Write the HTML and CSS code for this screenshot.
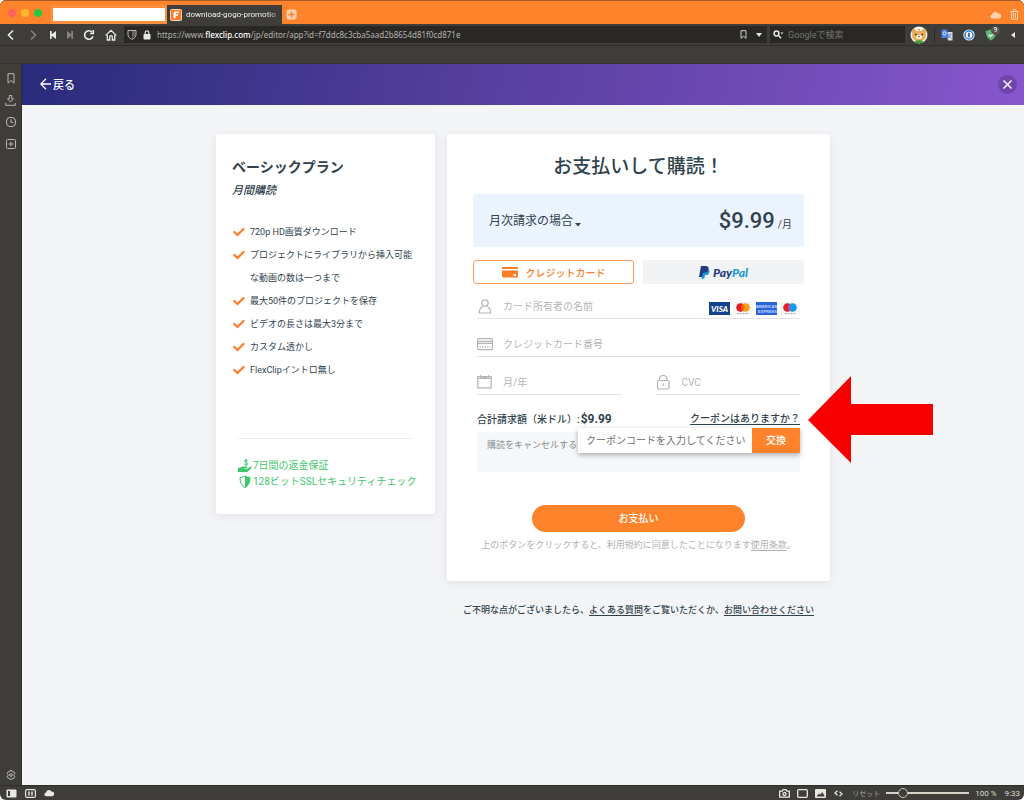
FILE: index.html
```html
<!DOCTYPE html>
<html lang="ja">
<head>
<meta charset="utf-8">
<meta name="viewport" content="width=device-width, initial-scale=1">
<title>FlexClip お支払い</title>
<link rel="stylesheet" href="styles.css">
</head>
<body>
<svg width="0" height="0" hidden>
  <symbol id="check" viewBox="0 0 12 10"><path d="m1.300 5 3.200 3 6-6" fill="none" stroke="#ff7d26" stroke-width="2.200" stroke-linecap="round"/></symbol>
</svg>
<div class="window">
  <header class="tabs">
    <span class="lights"><i class="light light-red"></i><i class="light light-yellow"></i><i class="light light-green"></i></span>
    <button class="tab" aria-label="タブ"><span class="tab-blank"></span></button>
    <button class="tab tab-active">
      <svg width="12" height="12" viewBox="0 0 12 12"><rect x=".5" y=".5" width="11" height="11" rx="1" fill="#ff7a22" stroke="#f2d3bd"/><path d="M3.500 9.500V4.200Q3.500 2.500 5 2.500H9.200L8.800 4.300H5.800V5.400H8.300L7.900 7H5.800V8Q5.600 9.500 3.500 9.500Z" fill="#fff"/></svg>
      <span class="tab-title">download-gogo-promotio</span>
    </button>
    <button class="icon new-tab" aria-label="新しいタブ"><svg width="11" height="11" viewBox="0 0 11 11"><rect x=".5" y=".5" width="10" height="10" rx="2" fill="#ffd0ac"/><path d="M5.500 2.500v6M2.500 5.500h6" stroke="#ff832b" stroke-width="1.400"/></svg></button>
    <span class="spacer"></span>
    <svg class="cloud" width="12" height="8" viewBox="0 0 12 8" fill="#ffd0ac"><path d="M2.500 7.500a2 2 0 0 1-.2-4A3.200 3.200 0 0 1 8.300 2.500a2.500 2.500 0 0 1 .7 5Z"/></svg>
    <svg class="bin" width="9" height="11" viewBox="0 0 9 11" fill="none" stroke="#ffd0ac"><path d="M.5 2.500h8M3 2.300V.7h3v1.600M1.500 2.500v7.800h6V2.500M3.500 4v5M5.500 4v5"/></svg>
  </header>

  <div class="address">
    <nav class="nav-buttons">
      <button class="icon" aria-label="戻る"><svg width="12" height="12" viewBox="0 0 12 12" class="line bright"><path d="M8 1.500 3.500 6 8 10.500"/></svg></button>
      <button class="icon" aria-label="進む"><svg width="12" height="12" viewBox="0 0 12 12" class="line dim"><path d="M4 1.500 8.500 6 4 10.500"/></svg></button>
      <button class="icon narrow" aria-label="最初へ"><svg width="10" height="10" viewBox="0 0 10 10" fill="#e9e9e6"><path d="M2 1h1.700v3.300L8 1v8L3.700 5.700V9H2Z"/></svg></button>
      <button class="icon narrow" aria-label="最後へ"><svg width="10" height="10" viewBox="0 0 10 10" fill="#85847f"><path d="M8 1H6.300v3.300L2 1v8l4.300-3.300V9H8Z"/></svg></button>
      <button class="icon" aria-label="再読み込み"><svg width="12" height="12" viewBox="0 0 12 12" class="line bright"><path d="M10 7.300A4.300 4.300 0 1 1 9 3M10.300 1v3.500H7"/></svg></button>
      <button class="icon" aria-label="ホーム"><svg width="12" height="12" viewBox="0 0 12 12" class="line bright thin"><path d="M.7 6.400 6 1.300l5.300 5.100M2.300 6v5h2.400V8a1.300 1.300 0 0 1 2.600 0v3h2.400V6"/></svg></button>
    </nav>
    <div class="url">
      <svg width="10" height="11" viewBox="0 0 10 11" fill="none" stroke="#bdbcb8"><path d="M1 1.500h8v4C9 8 7 9.500 5 10.300 3 9.500 1 8 1 5.500Z"/><path d="M5 2v7.500l3-2.700V2Z" fill="#64635e" stroke="none"/></svg>
      <svg width="8" height="10" viewBox="0 0 8 10"><rect x=".5" y="4" width="7" height="5.500" rx=".8" fill="#e5e5e2"/><path d="M2.200 4V2.700a1.800 1.800 0 0 1 3.600 0V4" fill="none" stroke="#e5e5e2" stroke-width="1.200"/></svg>
      <span class="url-text" role="textbox" aria-label="アドレス">https://www.<b>flexclip.com</b>/jp/editor/app?id=f7ddc8c3cba5aad2b8654d81f0cd871e</span>
      <button class="icon mark" aria-label="ブックマーク"><svg width="7" height="9" viewBox="0 0 7 9" fill="none" stroke="#cfcfcb"><path d="M1 .7h5v7.600L3.500 6.200 1 8.300Z"/></svg></button>
      <button class="icon" aria-label="履歴"><svg width="6" height="4" viewBox="0 0 6 4" fill="#e5e5e2"><path d="M0 0h6L3 4Z"/></svg></button>
    </div>
    <label class="search">
      <svg width="11" height="9" viewBox="0 0 11 9" fill="none" stroke="#e5e5e2" stroke-width="1.500"><circle cx="3.500" cy="3.500" r="2.400"/><path d="m5.300 5.300 2.700 3"/><path d="M7.500 2.500h3L9 4.200Z" fill="#e5e5e2" stroke="none"/></svg>
      <input type="search" placeholder="Googleで検索" aria-label="検索">
    </label>
    <div class="extensions">
      <button class="icon" aria-label="プロフィール"><svg width="18" height="18" viewBox="0 0 18 18"><circle cx="9" cy="9" r="8.500" fill="#f6efe0"/><circle cx="4.200" cy="5.500" r="2.500" fill="#e3ad5f"/><circle cx="13.800" cy="5.500" r="2.500" fill="#e3ad5f"/><ellipse cx="9" cy="9.500" rx="7" ry="6" fill="#e9b062"/><path d="M5 3.500Q9-.5 13 3.500L11 5H7Z" fill="#fff8e8"/><path d="M7.500 3.200h3L9 4.800Z" fill="#7b8a3c"/><ellipse cx="9" cy="11" rx="3" ry="2" fill="#fff2d6"/><circle cx="5.700" cy="8.500" r=".9" fill="#513315"/><circle cx="12.300" cy="8.500" r=".9" fill="#513315"/><path d="M8 10h2L9 11.500Z" fill="#513315"/><path d="M4.500 15.200Q9 13.500 13.500 15.200 12 17.500 9 17.500T4.500 15.200" fill="#3f9a2c"/></svg></button>
      <span class="rule"></span>
      <button class="icon" aria-label="翻訳"><svg width="12" height="12" viewBox="0 0 12 12"><path d="M5 3h6.500v8.500H7Z" fill="#d7dade"/><path d="M.5.500H6l2 8.500H.5Z" fill="#4a80e8"/><circle cx="3.500" cy="4.500" r="1.600" fill="none" stroke="#fff" stroke-width=".8"/><path d="M7.500 5.500h3M9 5v1c0 1.500-1 2.500-1.500 3M8 7l2.500 2.500" stroke="#6d83a5" stroke-width=".7" fill="none"/></svg></button>
      <button class="icon" aria-label="パスワード"><svg width="12" height="12" viewBox="0 0 12 12"><circle cx="6" cy="6" r="5.600" fill="#f5f9fd"/><circle cx="6" cy="6" r="4" fill="#fff" stroke="#2686e3" stroke-width="1.500"/><path d="M6 3.800v4.400" stroke="#294865" stroke-width="1.600"/></svg></button>
      <button class="icon badge-host" aria-label="保護"><svg width="12" height="12" viewBox="0 0 12 12"><path d="M.7 2 6 .5 11.300 2C11.300 7 9 10 6 11.500 3 10 .7 7 .7 2Z" fill="#5fb474"/><path d="m3.500 5.500 2 2 3.500-3.500" stroke="#e4f5e8" fill="none" stroke-width="1.300"/></svg><span class="badge">9</span></button>
      <button class="icon" aria-label="折りたたむ"><svg width="4" height="6" viewBox="0 0 4 6" fill="#e5e5e2"><path d="M4 0v6L0 3Z"/></svg></button>
    </div>
  </div>
  <div class="bookmarks"></div>

  <div class="workspace">
    <aside class="panel">
      <button class="icon" aria-label="ブックマーク"><svg width="8" height="11" viewBox="0 0 8 11"><path d="M1 .7h6v9.500L4 7.500 1 10.200Z"/></svg></button>
      <button class="icon" aria-label="ダウンロード"><svg width="11" height="11" viewBox="0 0 11 11"><path d="M4.300.5h2.400v3.200h1.800L5.500 7 2.500 3.700h1.800ZM.7 8v2.300h9.600V8"/></svg></button>
      <button class="icon" aria-label="履歴"><svg width="10" height="10" viewBox="0 0 10 10"><rect x=".5" y=".5" width="9" height="9" rx="3.500"/><path d="M5 2.300V5.300H7.500"/></svg></button>
      <button class="icon" aria-label="追加"><svg width="10" height="10" viewBox="0 0 10 10"><rect x=".5" y=".5" width="9" height="9" rx="1"/><path d="M5 2.500v5M2.500 5h5"/></svg></button>
      <button class="icon gear" aria-label="設定"><svg width="10" height="10" viewBox="0 0 10 10"><path d="M4 .6h2l.4 1.300 1.400-.3 1 1.700L8 4.300v1.400l.8 1-1 1.700-1.400-.3L6 9.400H4l-.4-1.300-1.400.3-1-1.700.8-1V4.300l-.8-1 1-1.700 1.400.3Z"/><circle cx="5" cy="5" r="1.300"/></svg></button>
    </aside>

    <div class="page">
      <div class="topbar">
        <a class="back" href="#"><svg width="11" height="12" viewBox="0 0 11 12" fill="none" stroke="#fff" stroke-width="1.300"><path d="M11 6H1M6 .8.900 6 6 11.200"/></svg>戻る</a>
        <button class="close" aria-label="閉じる"><svg width="9" height="9" viewBox="0 0 9 9" stroke="#fff" stroke-width="1.400"><path d="m.5.500 8 8M8.500.500l-8 8"/></svg></button>
      </div>

      <main class="checkout">
        <section class="card plan">
          <h2>ベーシックプラン</h2>
          <p class="period">月間購読</p>
          <ul class="features">
            <li><svg width="12" height="10"><use href="#check"/></svg>720p HD画質ダウンロード</li>
            <li><svg width="12" height="10"><use href="#check"/></svg>プロジェクトにライブラリから挿入可能な動画の数は一つまで</li>
            <li><svg width="12" height="10"><use href="#check"/></svg>最大50件のプロジェクトを保存</li>
            <li><svg width="12" height="10"><use href="#check"/></svg>ビデオの長さは最大3分まで</li>
            <li><svg width="12" height="10"><use href="#check"/></svg>カスタム透かし</li>
            <li><svg width="12" height="10"><use href="#check"/></svg>FlexClipイントロ無し</li>
          </ul>
          <div class="assurance">
            <p><svg width="14" height="14" viewBox="0 0 14 14" fill="#3fc76c"><path d="M0 8.800h2.200l2-1.200h4.200c1.200 0 1.200 1.500 0 1.600H6v.5h3.500l2.700-2c1-.5 1.900.5 1.200 1.300l-3.200 3.300c-.4.400-.8.600-1.400.6H0Z"/><path d="M9.700 1.700C9 .9 6.500.8 6.500 2.300c0 1.600 3.300.8 3.300 2.400 0 1.500-2.700 1.500-3.500.5M8.100 0v6.800" fill="none" stroke="#3fc76c" stroke-width="1"/></svg>7日間の返金保証</p>
            <p><svg width="14" height="14" viewBox="0 0 14 14"><path d="M7 1Q4.500 2.500 2 2.500C2 7.500 3.500 10.500 7 12.700 10.500 10.500 12 7.500 12 2.500Q9.500 2.500 7 1Z" fill="none" stroke="#3fc76c"/><path d="M7 1Q9.500 2.500 12 2.500C12 7.500 10.500 10.500 7 12.700Z" fill="#3fc76c"/></svg>128ビットSSLセキュリティチェック</p>
          </div>
        </section>

        <div class="purchase">
          <form class="card payment">
            <h1>お支払いして購読！</h1>
            <div class="billing">
              <label class="cycle">
                <select aria-label="請求サイクル"><option>月次請求の場合</option></select>
                <svg width="6" height="4" viewBox="0 0 6 4" fill="#30434c"><path d="M0 0h6L3 3.500Z"/></svg>
              </label>
              <p class="price"><strong>$9.99</strong>/月</p>
            </div>
            <div class="methods">
              <button type="button" class="method method-on"><svg width="16" height="12" viewBox="0 0 16 12" fill="#ff7d26"><path d="M1 1h14q1 0 1 1v1H0V2q0-1 1-1ZM0 4.500h16V10.500q0 1-1 1H1q-1 0-1-1Z"/><path d="M11.500 8h2.500v2h-2.500Z" fill="#fff"/></svg>クレジットカード</button>
              <button type="button" class="method paypal"><svg width="11" height="13" viewBox="0 0 11 13"><path d="M4 3.500h5.500c1.200.8 1.200 2 .8 3.200C9.800 8.500 8.500 9 7 9H6l-.7 3.700H2.500Z" fill="#179bd7"/><path d="M2 0h4.800C9 0 10 1.300 9.600 3.300 9.200 5.700 7.600 6.800 5.500 6.800H4L3.200 11H0Z" fill="#253b80"/></svg><span class="wordmark">Pay<em>Pal</em></span></button>
            </div>
            <div class="fields">
              <label class="field">
                <svg width="16" height="16" viewBox="0 0 16 16"><circle cx="8" cy="4" r="3.200"/><path d="M5.800 7.500C3.500 8.500 2.300 11 2.300 14H13.700C13.700 11 12.500 8.500 10.200 7.500"/></svg>
                <input type="text" placeholder="カード所有者の名前" aria-label="カード所有者の名前">
                <span class="brands">
                  <svg width="21" height="13" viewBox="0 0 21 13"><rect width="21" height="13" fill="#14418b"/><text x="10.500" y="9.500" class="visa">VISA</text></svg>
                  <svg width="20" height="13" viewBox="0 0 20 13"><rect width="20" height="13" fill="#f5f5f5"/><circle cx="7.500" cy="5.500" r="4.300" fill="#eb1b26"/><circle cx="12.500" cy="5.500" r="4.300" fill="#f79e1b"/><path d="M10 2a4.300 4.300 0 0 1 0 7 4.300 4.300 0 0 1 0-7" fill="#ff6200"/><path d="M4 11.500h12" stroke="#aaa" stroke-dasharray="1 .5"/></svg>
                  <svg width="21" height="13" viewBox="0 0 21 13"><rect width="21" height="13" fill="#2a62d8"/><text x="10.500" y="5.500" class="amex">AMERICAN</text><text x="11.500" y="10.500" class="amex">EXPRESS</text></svg>
                  <svg width="20" height="13" viewBox="0 0 20 13"><rect width="20" height="13" fill="#f5f5f5"/><circle cx="7.500" cy="5.500" r="4.300" fill="#eb1b26"/><circle cx="12.500" cy="5.500" r="4.300" fill="#0a9ee5"/><path d="M10 2a4.300 4.300 0 0 1 0 7 4.300 4.300 0 0 1 0-7" fill="#7375cf"/><path d="M5 11.500h10" stroke="#aaa" stroke-dasharray="1 .5"/></svg>
                </span>
              </label>
              <label class="field">
                <svg width="16" height="16" viewBox="0 0 16 16"><rect x=".6" y="1.600" width="14.800" height="11" rx="1.200"/><path d="M1 4.300h14M1 6.300h14"/><path d="M2.500 9.800h11" stroke-dasharray="1.500 1"/></svg>
                <input type="text" placeholder="クレジットカード番号" aria-label="クレジットカード番号">
              </label>
              <div class="pair">
                <label class="field">
                  <svg width="16" height="16" viewBox="0 0 16 16"><path d="M.8 1.500h13.400v11.400H.8ZM1 3.300h13"/><path d="M3.500 0v3M11.500 0v3M5 2.300h5"/></svg>
                  <input type="text" placeholder="月/年" aria-label="月/年">
                </label>
                <label class="field">
                  <svg width="16" height="16" viewBox="0 0 16 16"><rect x="1.500" y="5.500" width="11.500" height="8.500" rx="1"/><path d="M3.500 5.500V3.800a3.700 3.300 0 0 1 7.400 0v1.700M7.200 8.500v2.500"/></svg>
                  <input type="text" placeholder="CVC" aria-label="CVC">
                </label>
              </div>
              <div class="total">
                <p>合計請求額（米ドル）:<strong>$9.99</strong></p>
                <a href="#">クーポンはありますか？</a>
                <div class="coupon">
                  <input type="text" placeholder="クーポンコードを入力してください" aria-label="クーポンコード">
                  <button type="button">交換</button>
                </div>
              </div>
              <p class="notice">購読をキャンセルする</p>
            </div>
            <button type="button" class="pay">お支払い</button>
            <p class="terms">上のボタンをクリックすると、利用規約に同意したことになります<a href="#">使用条款</a>。</p>
            <svg class="arrow" width="126" height="88" viewBox="0 0 126 88"><path d="M0 44 43 0V28H125V59H43V87Z" fill="#f70000"/></svg>
          </form>
          <p class="help">ご不明な点がございましたら、<a href="#">よくある質問</a>をご覧いただくか、<a href="#">お問い合わせください</a></p>
        </div>
      </main>
    </div>
  </div>

  <footer class="status">
    <div class="status-left">
      <button class="icon" aria-label="パネル"><svg width="11" height="9" viewBox="0 0 11 9"><rect x=".5" y=".5" width="10" height="8" rx="1" fill="#e8e8e0"/><path d="M2 2h2v5H2Z" fill="#3e3d39"/></svg></button>
      <button class="icon" aria-label="タイル"><svg width="11" height="9" viewBox="0 0 11 9" fill="none" stroke="#e8e8e0"><rect x=".6" y=".6" width="9.800" height="7.800" rx="1.500" stroke-width="1.200"/><path d="M4 2.500v4M7 2.500v4" stroke-width="1.500"/></svg></button>
      <button class="icon" aria-label="同期"><svg width="11" height="8" viewBox="0 0 12 8" fill="#e8e8e0"><path d="M2.500 7.500a2 2 0 0 1-.2-4A3.200 3.200 0 0 1 8.300 2.500a2.500 2.500 0 0 1 .7 5Z"/></svg></button>
    </div>
    <span class="spacer"></span>
    <button class="icon" aria-label="撮影"><svg width="11" height="9" viewBox="0 0 11 9" fill="none" stroke="#e8e8e0" stroke-width="1.300"><path d="M.7 2.200h2.500L4 .7h3l.8 1.500h2.500v6H.7Z"/><circle cx="5.500" cy="5" r="1.500"/></svg></button>
    <button class="icon" aria-label="ウィンドウ"><svg width="11" height="9" viewBox="0 0 11 9" fill="none" stroke="#e8e8e0" stroke-width="1.300"><rect x=".7" y=".7" width="9.600" height="7.600" rx="1"/></svg></button>
    <button class="icon" aria-label="画像"><svg width="11" height="9" viewBox="0 0 11 9"><rect width="11" height="9" rx="1" fill="#e8e8e0"/><path d="M1.500 7.500 4 4.500l1.200 1.200L7.300 3 9.800 7.500Z" fill="#3e3d39"/></svg></button>
    <button class="icon" aria-label="効果"><svg width="9" height="7" viewBox="0 0 9 7" fill="none" stroke="#e8e8e0" stroke-width="1.300"><path d="M3.500.8.900 3l2.600 2.200M5.500 1.800 8.100 4 5.500 6.200"/></svg></button>
    <button class="reset">リセット</button>
    <input class="zoom" type="range" min="0" max="100" value="16" aria-label="ズーム">
    <span class="percent">100 %</span>
    <span class="clock">9:33</span>
  </footer>
</div>
</body>
</html>
```
FILE: styles.css
```css
* { box-sizing: border-box; }
html { background: #fff; }
body { margin: 0; font-family: Roboto, "Noto Sans CJK JP", sans-serif; font-size: 10px; color: #30434c; }
h1, h2, p, ul { margin: 0; padding: 0; }
svg { display: block; flex: none; }
svg[hidden] { display: none; }
button, input, select { font: inherit; color: inherit; border: 0; padding: 0; margin: 0; background: none; }
input:focus { outline: none; }
input { min-width: 0; }
a { color: inherit; text-underline-offset: 2px; }
.spacer { flex: 1; }
.icon { display: flex; align-items: center; justify-content: center; }

.window { min-height: 100vh; display: flex; flex-direction: column; overflow: hidden; border-radius: 6px; background: #3e3d39; }

.tabs { height: 24px; display: flex; align-items: center; background: #ff832b; border-top: 1px solid #a95a24; padding-right: 5px; font-family: Roboto, sans-serif; font-size: 8px; }
.lights { display: flex; gap: 5px; padding: 0 9px 0 8px; }
.light { width: 8px; height: 8px; border-radius: 50%; }
.light-red { background: #ff6159; }
.light-yellow { background: #f9b92e; }
.light-green { background: #29c840; }
.tab { width: 116px; height: 19px; padding: 0 2px; align-self: flex-end; display: flex; align-items: center; background: #ff8f40; }
.tab-blank { flex: 1; height: 13px; background: #fff; }
.tab-active { width: 115px; padding: 0 2px 0 3px; gap: 4px; background: #3e3d39; color: #f1f1ee; }
.tab-title { flex: 1; white-space: nowrap; text-align: left; mask-image: linear-gradient(90deg, #000 85%, rgba(0, 0, 0, .3)); }
.new-tab { margin: 4px 0 0 4px; }
.cloud, .bin { margin-top: 4px; }
.bin { margin-left: 8px; }

.address { height: 21px; display: flex; align-items: center; background: #3e3d39; font-size: 9px; }
.line { fill: none; stroke-width: 1.6; }
.thin { stroke-width: 1.3; }
.bright { stroke: #e9e9e6; }
.dim { stroke: #85847f; }
.nav-buttons { display: flex; padding-right: 2px; }
.nav-buttons .icon { width: 22px; }
.nav-buttons .narrow { width: 17px; }
.url { flex: 1; min-width: 0; height: 17px; display: flex; align-items: center; gap: 6px; padding: 0 5px 0 3px; background: #292825; color: #b4b3ae; }
.url-text { flex: 1; overflow: hidden; white-space: nowrap; font-family: "Noto Sans", sans-serif; font-size: 8px; line-height: 12px; }
.url-text b { font-weight: 500; color: #fff; }
.mark { margin-right: 3px; }
.search { width: 135px; height: 17px; margin-left: 3px; padding: 0 3px; display: flex; align-items: center; gap: 4px; background: #292825; }
.search input { flex: 1; color: #ddd; }
.search input::placeholder { color: #74736e; opacity: 1; }
.extensions { display: flex; align-items: center; padding: 0 5px; }
.extensions .icon { width: 22px; }
.extensions .icon:first-child { width: 18px; }
.extensions .icon:last-child { width: 21px; margin-right: -4px; }
.rule { width: 1px; height: 14px; margin: 0 1px 0 6px; background: #2b2a27; }
.badge-host { position: relative; }
.badge { position: absolute; top: -3px; right: 2px; width: 9px; height: 9px; border-radius: 50%; background: #555450; color: #fff; font-size: 7px; line-height: 9px; }
.bookmarks { height: 19px; border-top: 1px solid #2f2e2b; border-bottom: 1px solid #34332f; }

.workspace { flex: 1; display: flex; }
.panel { width: 22px; display: flex; flex-direction: column; align-items: center; padding-top: 3px; border-right: 1px solid #2e2d2a; }
.panel .icon { height: 22px; }
.panel .gear { margin-top: auto; height: 20px; }
.panel svg { fill: none; stroke: #b8b7b2; }

.page { flex: 1; min-width: 0; background: #f3f4f6; }
.topbar { height: 41px; display: flex; align-items: center; justify-content: space-between; padding: 0 7px 0 18px; background: linear-gradient(100deg, #292b7b, #6345aa 60%, #8856cc); color: #fff; }
.back { display: flex; align-items: center; gap: 2px; padding-bottom: 2px; font-size: 11px; font-weight: 500; text-decoration: none; }
.close { width: 19px; height: 19px; border-radius: 50%; background: #6f46ab; display: flex; align-items: center; justify-content: center; }

.checkout { display: flex; justify-content: center; align-items: flex-start; gap: 12px; padding: 29px 0; }
.card { background: #fff; border-radius: 3px; box-shadow: 0 2px 8px rgba(40, 60, 80, .09); }
.plan { width: 219px; padding: 23px 22px 24px 16px; }
.plan h2 { font-size: 14px; line-height: 20px; font-weight: 700; }
.period { margin-top: 4px; font-size: 11px; line-height: 20px; font-style: italic; font-weight: 500; }
.features { margin-top: 20px; list-style: none; font-size: 9px; line-height: 23px; }
.features li { position: relative; padding-left: 18px; }
.features svg { position: absolute; left: 1px; top: 6px; }
.assurance { margin: 56px 0 0 6px; padding-top: 19px; border-top: 1px solid #edeeef; color: #3fc76c; line-height: 16px; white-space: nowrap; }
.assurance p { display: flex; align-items: center; gap: 1px; }

.purchase { width: 383px; }
.payment { position: relative; padding: 21px 26px 28px; }
.payment h1 { font-size: 19px; line-height: 24px; font-weight: 500; text-align: center; }
.billing { margin-top: 15px; height: 53px; padding: 0 12px 0 16px; display: flex; align-items: center; justify-content: space-between; background: #ebf3ff; border-radius: 3px; }
.cycle { display: flex; align-items: center; gap: 1px; font-size: 12px; }
.cycle select { appearance: none; }
.cycle svg { margin-top: 8px; }
.price strong { margin-right: 3px; font-size: 22px; font-weight: 500; }
.methods { margin-top: 13px; display: grid; grid-template-columns: 1fr 1fr; gap: 9px; }
.method { height: 24px; display: flex; align-items: center; justify-content: center; gap: 8px; border-radius: 3px; background: #f1f2f4; }
.method-on { border: 1px solid #ff9c59; background: #fff; color: #ff7d26; font-weight: 500; }
.paypal { gap: 3px; }
.wordmark { font-family: Lato, sans-serif; font-size: 12px; font-weight: 900; font-style: italic; color: #253b80; }
.wordmark em { color: #179bd7; }

.fields { padding: 0 4px; }
.field { height: 24px; min-width: 0; margin-top: 14px; display: flex; align-items: center; gap: 10px; border-bottom: 1px solid #e3e4e5; }
.field:first-child { margin-top: 11px; }
.field > svg { fill: none; stroke: #b4b4b4; stroke-width: 1.200; }
.field input { flex: 1; width: 0; }
.field input::placeholder { color: #b5b5b5; opacity: 1; }
.brands { display: flex; gap: 3px; padding-top: 3px; }
.visa { font: italic 900 8px Lato, sans-serif; fill: #fff; text-anchor: middle; }
.amex { font: 700 4px "Liberation Sans", sans-serif; fill: #c8d8ff; text-anchor: middle; }
.pair { display: grid; grid-template-columns: 1fr 1fr; gap: 34px; }
.pair .field { margin-top: 14px; }
.total { position: relative; margin-top: 14px; display: flex; justify-content: space-between; line-height: 20px; font-weight: 500; }
.total strong { margin-left: 1px; font-size: 12px; font-weight: 700; }
.coupon { position: absolute; right: 0; top: 19px; width: 222px; height: 25px; display: flex; background: #fff; box-shadow: 0 2px 5px rgba(0, 0, 0, .3); font-weight: 400; }
.coupon input { flex: 1; padding-left: 8px; }
.coupon input::placeholder { color: #6c6f71; opacity: 1; }
.coupon button { width: 48px; background: #ff832b; color: #fff; font-weight: 500; }
.notice { margin-top: 2px; height: 40px; padding: 5px 10px; background: #f5f7f9; color: #848d92; font-size: 9px; line-height: 16px; }
.pay { display: block; width: 213px; height: 27px; margin: 33px auto 0; padding-bottom: 2px; border-radius: 14px; background: #ff832b; color: #fff; font-weight: 500; }
.terms { margin-top: 5px; font-size: 9px; line-height: 16px; color: #aeb2b4; text-align: center; white-space: nowrap; }
.arrow { position: absolute; left: 361px; top: 242px; }
.help { margin-top: 21px; font-size: 9px; line-height: 16px; font-weight: 500; text-align: center; }

.status { height: 15px; display: flex; align-items: center; padding: 0 4px 0 2px; color: #deddd8; font-size: 8px; border-top: 1px solid #2e2d2a; }
.status-left { display: flex; gap: 1px; }
.status .icon { width: 18px; }
.reset { margin-left: 5px; color: #a5a49f; font-size: 7px; }
.zoom { width: 83px; height: 10px; margin: 0 6px; appearance: none; }
.zoom::-webkit-slider-runnable-track { height: 2px; background: #d5d5c9; }
.zoom::-webkit-slider-thumb { appearance: none; width: 10px; height: 10px; margin-top: -4px; border: 1px solid #c5c5ba; border-radius: 50%; background: #3e3d39; }
.clock { margin-left: 8px; }
```
